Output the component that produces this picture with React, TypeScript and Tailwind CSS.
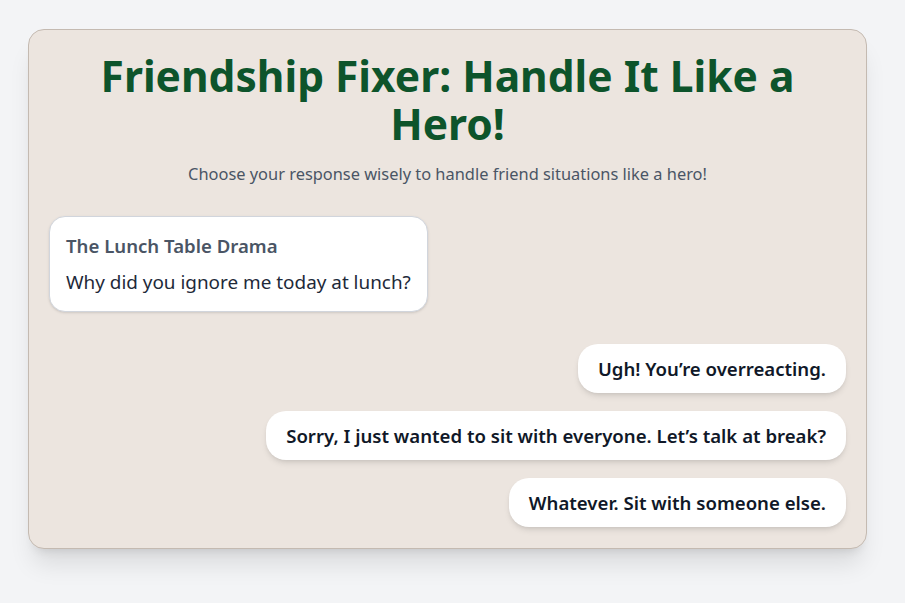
import React from 'react';

interface Scenario {
  title: string;
  prompt: string;
  choices: string[];
}

const scenario: Scenario = {
  title: 'The Lunch Table Drama',
  prompt: 'Why did you ignore me today at lunch?',
  choices: [
    'Ugh! You\u2019re overreacting.',
    'Sorry, I just wanted to sit with everyone. Let\u2019s talk at break?',
    'Whatever. Sit with someone else.',
  ],
};

const App: React.FC = () => {
  return (
    <div
      className="min-h-screen bg-gray-100 p-7 pt-[29px]"
      style={{ fontFamily: '"Noto Sans", "Open Sans", sans-serif' }}
    >
      <div className="w-full max-w-[839px] rounded-2xl border border-[#c4bab1] bg-[#ece5df] p-5 pb-[21px] shadow-xl">
        {/* Header */}
        <h1 className="pt-0.5 text-center text-[42.5px] font-bold leading-[48px] text-green-900">
          Friendship Fixer: Handle It Like a Hero!
        </h1>
        <p className="mt-3.5 text-center text-[16.4px] leading-6 text-gray-600">
          Choose your response wisely to handle friend situations like a hero!
        </p>

        {/* Friend message */}
        <div className="mt-[30px] w-fit rounded-2xl border border-gray-300 bg-white px-4 py-[15px] shadow-sm">
          <h2 className="mb-2 text-[18.6px] font-semibold leading-7 text-gray-600">{scenario.title}</h2>
          <p className="text-[18.9px] leading-7 text-gray-800">{scenario.prompt}</p>
        </div>

        {/* Response options */}
        <div className="mt-8 flex flex-col items-end gap-[18px]">
          {scenario.choices.map((choice) => (
            <button
              key={choice}
              className="rounded-[20px] bg-white px-5 py-2.5 text-[18.6px] font-semibold leading-[29px] text-gray-900 shadow-md"
            >
              {choice}
            </button>
          ))}
        </div>
      </div>
    </div>
  );
};

export default App;
